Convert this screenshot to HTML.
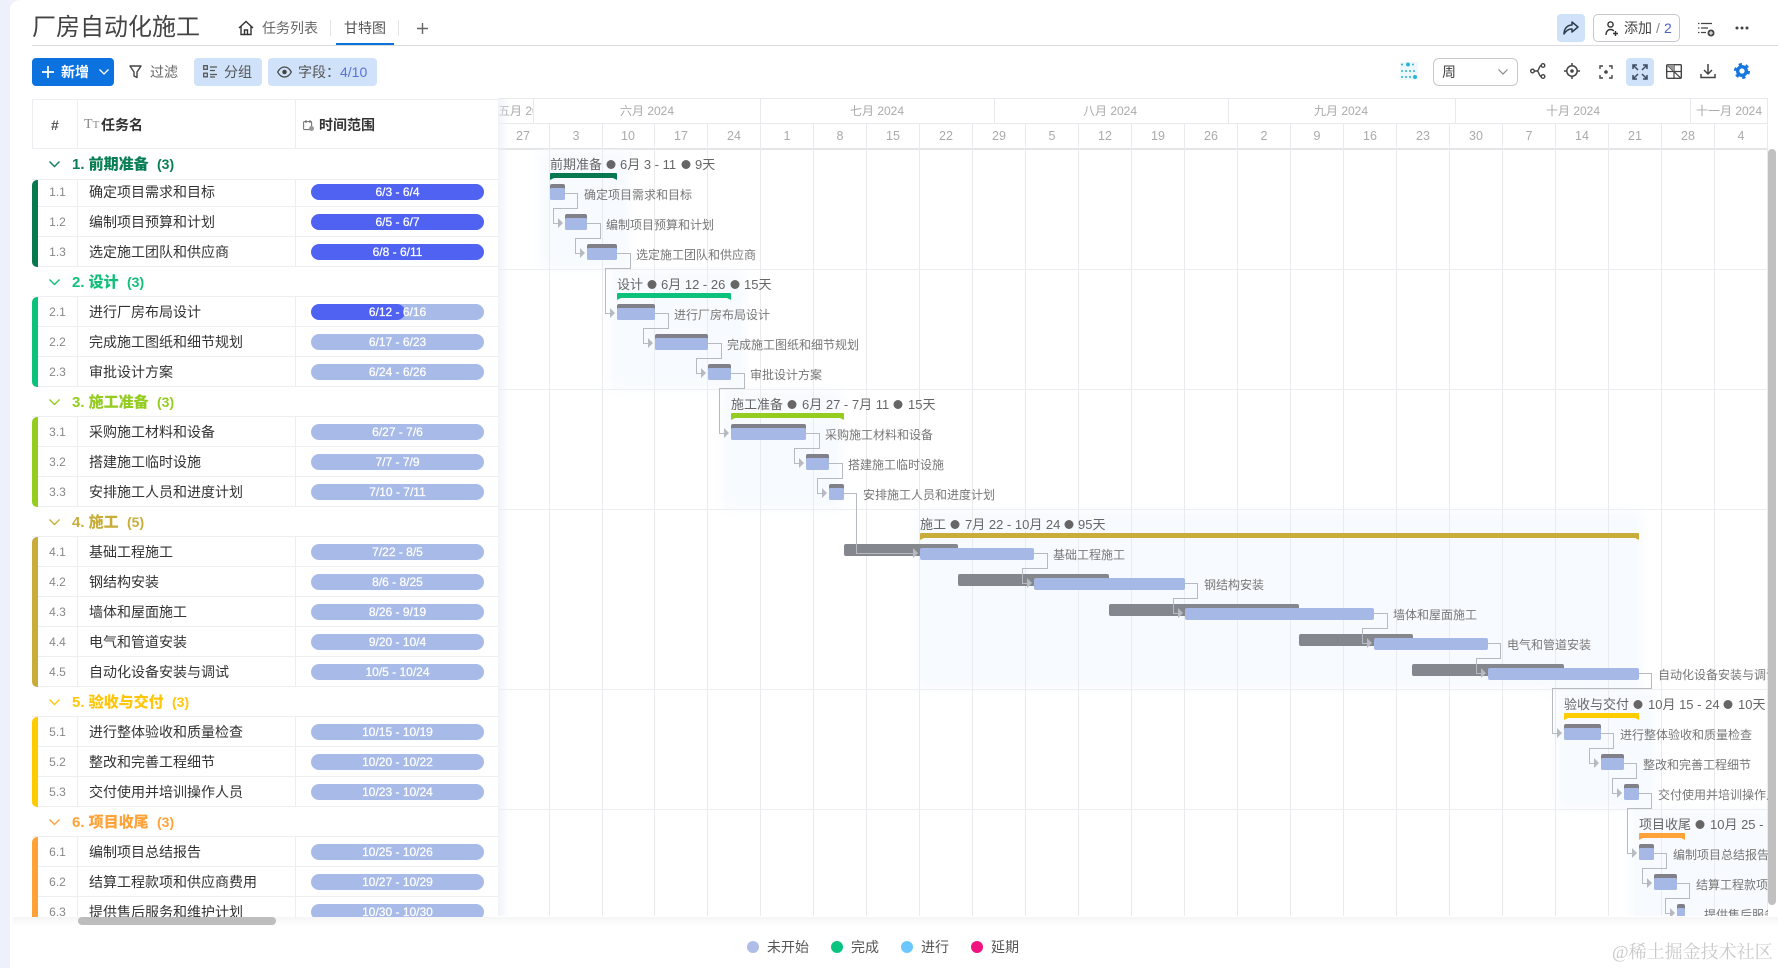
<!DOCTYPE html>
<html lang="zh"><head><meta charset="utf-8"><title>厂房自动化施工</title>
<style>
*{box-sizing:border-box}
html,body{margin:0;padding:0;width:1778px;height:968px;overflow:hidden;background:#fff;font-family:"Liberation Sans","Noto Sans CJK SC",sans-serif;color:#333}
.a{position:absolute;white-space:nowrap;line-height:20px;font-size:14px}
.side{position:absolute;left:0;top:0;width:20px;height:968px;background:#eef1fb}
.main{position:absolute;left:10px;top:0;width:1768px;height:968px;background:#fff;border-top-left-radius:10px}
.btn{position:absolute;background:#cfe2f9;border-radius:4px}
#tbl{position:absolute;left:32px;top:99px;width:466px;height:818px;overflow:hidden;background:#fff}
.r{position:absolute;left:6px;width:460px;height:30px;border-bottom:1px solid #eceef1;background:#fff}
.r::before{content:"";position:absolute;left:39px;top:0;bottom:0;width:1px;background:#eceef1}
.r::after{content:"";position:absolute;left:257px;top:0;bottom:0;width:1px;background:#eceef1}
.n{position:absolute;left:0;width:39px;top:5px;text-align:center;font-size:12px;line-height:20px;color:#888}
.t{position:absolute;left:51px;top:5px;font-size:14px;line-height:20px;color:#333;white-space:nowrap}
.p{position:absolute;left:273px;top:7px;width:173px;height:16px;border-radius:8px;background:#a8bbe8;color:#fff;font-size:12px;line-height:16px;text-align:center;overflow:hidden;-webkit-text-stroke:.25px #fff}
.p.d{background:#4f62f2}
.p i{position:absolute;left:0;top:0;height:16px;width:94px;background:#4f62f2;border-radius:8px}
.p span{position:relative}
.g{position:absolute;left:0;width:466px;height:30px;background:#fff;border-bottom:1px solid #eceef1;font-weight:bold;font-size:15px;line-height:30px}
.g b{position:absolute;left:40px;top:0;white-space:pre}
.g svg{position:absolute;left:17px;top:12px}
.bar{position:absolute;left:0;width:6px;border-radius:5px 0 0 5px}
.lg{position:absolute;top:941px;width:12px;height:12px;border-radius:6px}
.lt{position:absolute;top:937px;font-size:14px;line-height:20px;color:#555;white-space:nowrap}
svg text{font-family:"Liberation Sans","Noto Sans CJK SC",sans-serif}
</style></head><body>
<div class="side"></div><div class="main"></div>

<!-- header -->
<div class="a" style="left:32px;top:12px;font-size:24px;line-height:32px;color:#444">厂房自动化施工</div>
<svg style="position:absolute;left:238px;top:20px" width="16" height="16" viewBox="0 0 16 16" fill="none" stroke="#333" stroke-width="1.4"><path d="M1 8 8 1.5 15 8M3 6.5V14.5H13V6.5M6.5 14.5V10H9.5V14.5"/></svg>
<div class="a" style="left:262px;top:18px;color:#666">任务列表</div>
<div style="position:absolute;left:330px;top:20px;width:1px;height:16px;background:#e4e4e4"></div>
<div class="a" style="left:344px;top:18px;color:#555">甘特图</div>
<div style="position:absolute;left:398px;top:20px;width:1px;height:16px;background:#e4e4e4"></div>
<svg style="position:absolute;left:417px;top:23px" width="11" height="11" fill="none" stroke="#666" stroke-width="1.4"><path d="M5.5 0V11M0 5.5H11"/></svg>
<div style="position:absolute;left:32px;top:45px;width:1746px;height:1px;background:#dcdcdc"></div>
<div style="position:absolute;left:336px;top:43px;width:58px;height:2px;background:#0b72d9"></div>

<div class="btn" style="left:1557px;top:14px;width:28px;height:28px"></div>
<svg style="position:absolute;left:1563px;top:21px" width="16" height="14" viewBox="0 0 16 14" fill="none" stroke="#2d3a4f" stroke-width="1.5" stroke-linejoin="round"><path d="M9 1 15 6 9 11V8C5 8 3 10 1 13 1 8 4 4 9 4Z"/></svg>
<div style="position:absolute;left:1593px;top:14px;width:87px;height:28px;border:1px solid #c5c8cc;border-radius:5px"></div>
<svg style="position:absolute;left:1605px;top:21px" width="13" height="15" viewBox="0 0 13 15" fill="none" stroke="#333" stroke-width="1.4"><circle cx="5.5" cy="3.5" r="2.6"/><path d="M1 14C1 10.500 3 8.500 5.500 8.500C7 8.500 8 9 8.800 10M8 12.500H13M10.500 10V15"/></svg>
<div class="a" style="left:1624px;top:18px;color:#444">添加</div>
<div class="a" style="left:1656px;top:18px;color:#888">/</div>
<div class="a" style="left:1664px;top:18px;color:#4a63c0">2</div>
<svg style="position:absolute;left:1698px;top:21px" width="17" height="16" viewBox="0 0 17 16" fill="none" stroke="#444" stroke-width="1.3"><path d="M3 2.5H14M3 7H10M3 11.5H8M0 2.5H1.5M0 7H1.5M0 11.5H1.5"/><circle cx="13" cy="12" r="3.5" fill="#444" stroke="none"/><path d="M11 12H15M13 10V14" stroke="#fff" stroke-width="1"/></svg>
<svg style="position:absolute;left:1735px;top:26px" width="14" height="4" fill="#444"><circle cx="2" cy="2" r="1.5"/><circle cx="7" cy="2" r="1.5"/><circle cx="12" cy="2" r="1.5"/></svg>

<!-- toolbar -->
<div style="position:absolute;left:32px;top:58px;width:82px;height:28px;background:#0b72e0;border-radius:4px"></div>
<svg style="position:absolute;left:42px;top:66px" width="12" height="12" fill="none" stroke="#fff" stroke-width="1.7"><path d="M6 0V12M0 6H12"/></svg>
<div class="a" style="left:61px;top:62px;color:#fff;font-weight:bold">新增</div>
<svg style="position:absolute;left:99px;top:69px" width="10" height="6" fill="none" stroke="#fff" stroke-width="1.3"><path d="M.5 .5 5 5 9.5 .5"/></svg>
<svg style="position:absolute;left:129px;top:65px" width="13" height="14" fill="none" stroke="#444" stroke-width="1.4" stroke-linejoin="round"><path d="M1 1H12L8 7V12.500L5 11V7Z"/></svg>
<div class="a" style="left:150px;top:62px;color:#666">过滤</div>
<div class="btn" style="left:194px;top:58px;width:68px;height:28px"></div>
<svg style="position:absolute;left:203px;top:65px" width="14" height="13" fill="none" stroke="#555" stroke-width="1.3"><rect x=".7" y=".7" width="3.6" height="3.6"/><rect x=".7" y="8.2" width="3.6" height="3.6"/><path d="M7 2H14M7 5.5H12M7 9.5H14M7 12H12"/></svg>
<div class="a" style="left:224px;top:62px;color:#555">分组</div>
<div class="btn" style="left:268px;top:58px;width:109px;height:28px"></div>
<svg style="position:absolute;left:277px;top:66px" width="15" height="12" fill="none" stroke="#444" stroke-width="1.3"><path d="M.7 6C2.500 2.500 5 1 7.500 1S12.500 2.500 14.300 6C12.500 9.500 10 11 7.500 11S2.500 9.500 .7 6Z"/><circle cx="7.5" cy="6" r="1.6" fill="#444"/></svg>
<div class="a" style="left:298px;top:62px;color:#555">字段：</div>
<div class="a" style="left:340px;top:62px;color:#5a74d0">4/10</div>

<svg style="position:absolute;left:1400px;top:62px" width="18" height="18" fill="#29b6d8"><rect x="0" y="0" width="18" height="18" fill="#eef8fb"/><circle cx="8" cy="2.5" r="2"/><circle cx="2" cy="2.5" r="1"/><circle cx="13" cy="2.5" r="1"/><circle cx="2" cy="9" r="1"/><circle cx="6" cy="9" r="1"/><circle cx="10" cy="9" r="1"/><circle cx="14" cy="9" r="1"/><circle cx="2" cy="15" r="1"/><circle cx="6" cy="15" r="1"/><circle cx="10" cy="15" r="1"/><circle cx="15" cy="15" r="2"/></svg>
<div style="position:absolute;left:1433px;top:58px;width:85px;height:28px;border:1px solid #c9c9c9;border-radius:6px"></div>
<div class="a" style="left:1442px;top:62px;color:#444">周</div>
<svg style="position:absolute;left:1498px;top:69px" width="10" height="6" fill="none" stroke="#888" stroke-width="1.2"><path d="M.5 .5 5 5 9.5 .5"/></svg>

<svg style="position:absolute;left:1530px;top:63px" width="16" height="16" fill="none" stroke="#444" stroke-width="1.4"><circle cx="2.5" cy="8" r="1.8"/><circle cx="13" cy="2.5" r="1.8"/><circle cx="13" cy="13.5" r="1.8"/><path d="M4.3 8H7C9 8 9 2.5 11.2 2.5M7 8C9 8 9 13.5 11.2 13.5"/></svg>
<svg style="position:absolute;left:1564px;top:63px" width="16" height="16" fill="none" stroke="#444" stroke-width="1.5"><circle cx="8" cy="8" r="5.2"/><circle cx="8" cy="8" r="1" fill="#444"/><path d="M8 0V3M8 13V16M0 8H3M13 8H16"/></svg>
<svg style="position:absolute;left:1599px;top:65px" width="14" height="14" fill="none" stroke="#444" stroke-width="1.4"><path d="M1 4V1H4M10 1H13V4M13 10V13H10M4 13H1V10"/><circle cx="7" cy="7" r="1.1" fill="#444"/></svg>
<div class="btn" style="left:1626px;top:58px;width:28px;height:28px"></div>
<svg style="position:absolute;left:1632px;top:64px" width="16" height="16" fill="none" stroke="#3a4a60" stroke-width="1.5"><path d="M1 5V1H5M1 1 6 6M15 5V1H11M15 1 10 6M1 11V15H5M1 15 6 10M15 11V15H11M15 15 10 10"/></svg>
<svg style="position:absolute;left:1666px;top:64px" width="16" height="15" fill="none" stroke="#444" stroke-width="1.4"><rect x=".7" y=".7" width="14.6" height="13.6" rx="1"/><path d="M.7 .7 15 14.3M8 .7V14M.7 7.5H15" stroke-width="1.2"/><path d="M.7 .7H8V7.5Z" fill="#999" stroke="none"/></svg>
<svg style="position:absolute;left:1700px;top:63px" width="16" height="16" fill="none" stroke="#444" stroke-width="1.5"><path d="M8 1V10.500M4 7 8 11 12 7M1 11V14.500H15V11"/></svg>
<svg style="position:absolute;left:1734px;top:63px" width="16" height="16" fill="none" stroke="#1677e0"><circle cx="8" cy="8" r="4.3" stroke-width="3.4"/><circle cx="8" cy="8" r="6.8" stroke-width="2.4" stroke-dasharray="3.3 3.82"/></svg>

<!-- gantt -->
<svg style="position:absolute;left:0;top:0" width="1778" height="968" viewBox="0 0 1778 968">
<defs>
<clipPath id="c"><rect x="498" y="149" width="1270" height="767"/></clipPath>
<clipPath id="m"><rect x="498" y="99" width="35" height="24"/></clipPath>
<filter id="bl" x="-20%" y="-20%" width="140%" height="140%"><feGaussianBlur stdDeviation="6"/></filter>
</defs>
<!-- header grid -->
<g stroke="#e7e9ec" stroke-width="1">
<path d="M498 98.5H1768M498 123.5H1768"/>
<path d="M533.5 99V123M760.5 99V123M994.5 99V123M1228.5 99V123M1455.5 99V123M1690.5 99V123M1767.5 99V149"/>
</g>
<path d="M498 149H1768" stroke="#e3e5e8" stroke-width="2"/>
<g clip-path="url(#c)">
<g fill="#f7fafe" filter="url(#bl)">
<rect x="540" y="150" width="90" height="119"/>
<rect x="610" y="270" width="135" height="119"/>
<rect x="722" y="390" width="120" height="119"/>
<rect x="916" y="510" width="726" height="179"/>
<rect x="1556" y="690" width="100" height="119"/>
<rect x="1630" y="810" width="140" height="116"/>
</g>
</g>
<g fill="none" stroke="#e9ebef" stroke-width="1">
<path d="M549.5 124V916M602.5 124V916M654.5 124V916M707.5 124V916M760.5 124V916M813.5 124V916M866.5 124V916M919.5 124V916M972.5 124V916M1025.5 124V916M1078.5 124V916M1131.5 124V916M1184.5 124V916M1237.5 124V916M1290.5 124V916M1343.5 124V916M1396.5 124V916M1449.5 124V916M1502.5 124V916M1555.5 124V916M1608.5 124V916M1661.5 124V916M1714.5 124V916M1767.5 124V916"/>
<path d="M498 269.5H1768M498 389.5H1768M498 509.5H1768M498 689.5H1768M498 809.5H1768" stroke="#eceef1"/>
</g>
<!-- header text -->
<g font-size="12" fill="#aaa" text-anchor="middle">
<text x="498" y="115" text-anchor="start" clip-path="url(#m)">五月 2024</text>
<text x="647" y="115">六月 2024</text><text x="877" y="115">七月 2024</text><text x="1110" y="115">八月 2024</text><text x="1341" y="115">九月 2024</text><text x="1573" y="115">十月 2024</text><text x="1729" y="115">十一月 2024</text>
<g font-size="12.5">
<text x="523" y="140">27</text><text x="576" y="140">3</text><text x="628" y="140">10</text><text x="681" y="140">17</text><text x="734" y="140">24</text><text x="787" y="140">1</text><text x="840" y="140">8</text><text x="893" y="140">15</text><text x="946" y="140">22</text><text x="999" y="140">29</text><text x="1052" y="140">5</text><text x="1105" y="140">12</text><text x="1158" y="140">19</text><text x="1211" y="140">26</text><text x="1264" y="140">2</text><text x="1317" y="140">9</text><text x="1370" y="140">16</text><text x="1423" y="140">23</text><text x="1476" y="140">30</text><text x="1529" y="140">7</text><text x="1582" y="140">14</text><text x="1635" y="140">21</text><text x="1688" y="140">28</text><text x="1741" y="140">4</text>
</g></g>
<g clip-path="url(#c)">
<!-- baselines -->
<g fill="#85878f">
<rect x="844" y="544" width="114" height="12" rx="2"/><rect x="958" y="574" width="151" height="12" rx="2"/><rect x="1109" y="604" width="190" height="12" rx="2"/><rect x="1299" y="634" width="114" height="12" rx="2"/><rect x="1412" y="664" width="152" height="12" rx="2"/>
</g>
<!-- group bars -->
<path fill="#07784f" d="M550 174Q550 173 551 173H616Q617 173 617 174V180L613 178H554L550 180Z"/>
<path fill="#0cc27a" d="M617 294Q617 293 618 293H730Q731 293 731 294V300L727 298H621L617 300Z"/>
<path fill="#94cc20" d="M731 414Q731 413 732 413H843Q844 413 844 414V420L840 418H735L731 420Z"/>
<path fill="#c8ad3a" d="M920 534Q920 533 921 533H1638Q1639 533 1639 534V540L1635 538H924L920 540Z"/>
<path fill="#ffcc00" d="M1564 714Q1564 713 1565 713H1638Q1639 713 1639 714V720L1635 718H1568L1564 720Z"/>
<path fill="#ffa338" d="M1639 834Q1639 833 1640 833H1684Q1685 833 1685 834V840L1681 838H1643L1639 840Z"/>
<!-- task bars with header -->
<g fill="#7f8089">
<rect x="550" y="184" width="15" height="10" rx="2"/><rect x="565" y="214" width="22" height="10" rx="2"/><rect x="587" y="244" width="30" height="10" rx="2"/>
<rect x="617" y="304" width="38" height="10" rx="2"/><rect x="655" y="334" width="53" height="10" rx="2"/><rect x="708" y="364" width="23" height="10" rx="2"/>
<rect x="731" y="424" width="75" height="10" rx="2"/><rect x="806" y="454" width="23" height="10" rx="2"/><rect x="829" y="484" width="15" height="10" rx="2"/>
<rect x="1564" y="724" width="37" height="10" rx="2"/><rect x="1601" y="754" width="23" height="10" rx="2"/><rect x="1624" y="784" width="15" height="10" rx="2"/>
<rect x="1639" y="844" width="15" height="10" rx="2"/><rect x="1654" y="874" width="23" height="10" rx="2"/><rect x="1677" y="904" width="8" height="10" rx="2"/>
</g>
<g fill="#a6b9e6">
<rect x="550" y="188" width="15" height="12" rx="1.5"/><rect x="565" y="218" width="22" height="12" rx="1.5"/><rect x="587" y="248" width="30" height="12" rx="1.5"/>
<rect x="617" y="308" width="38" height="12" rx="1.5"/><rect x="655" y="338" width="53" height="12" rx="1.5"/><rect x="708" y="368" width="23" height="12" rx="1.5"/>
<rect x="731" y="428" width="75" height="12" rx="1.5"/><rect x="806" y="458" width="23" height="12" rx="1.5"/><rect x="829" y="488" width="15" height="12" rx="1.5"/>
<rect x="920" y="548" width="114" height="12" rx="2"/><rect x="1034" y="578" width="151" height="12" rx="2"/><rect x="1185" y="608" width="189" height="12" rx="2"/><rect x="1374" y="638" width="114" height="12" rx="2"/><rect x="1488" y="668" width="151" height="12" rx="2"/>
<rect x="1564" y="728" width="37" height="12" rx="1.5"/><rect x="1601" y="758" width="23" height="12" rx="1.5"/><rect x="1624" y="788" width="15" height="12" rx="1.5"/>
<rect x="1639" y="848" width="15" height="12" rx="1.5"/><rect x="1654" y="878" width="23" height="12" rx="1.5"/><rect x="1677" y="908" width="8" height="12" rx="1.5"/>
</g>
<!-- connectors -->
<g fill="none" stroke="#b6bac1" stroke-width="1">
<path d="M565 193.5H577.5V208.5H553.5V223.5H559"/>
<path d="M587 223.5H600.5V238.5H575.5V253.5H581"/>
<path d="M617 253.5H630.5V268.5H605.5V313.5H611"/>
<path d="M655 313.5H668.5V328.5H643.5V343.5H649"/>
<path d="M708 343.5H721.5V358.5H696.5V373.5H702"/>
<path d="M731 373.5H744.5V388.5H719.5V433.5H725"/>
<path d="M806 433.5H819.5V448.5H794.5V463.5H800"/>
<path d="M829 463.5H842.5V478.5H817.5V493.5H823"/>
<path d="M844 493.5H856.5V553.5H914"/>
<path d="M1034 553.5H1047.5V568.5H1022.5V583.5H1028"/>
<path d="M1185 583.5H1197.5V598.5H1173.5V613.5H1179"/>
<path d="M1374 613.5H1387.5V628.5H1362.5V643.5H1368"/>
<path d="M1488 643.5H1500.5V658.5H1476.5V673.5H1482"/>
<path d="M1639 673.5H1651.5V688.5H1552.5V733.5H1558"/>
<path d="M1601 733.5H1613.5V748.5H1589.5V763.5H1595"/>
<path d="M1624 763.5H1636.5V778.5H1612.5V793.5H1618"/>
<path d="M1639 793.5H1651.5V808.5H1627.5V853.5H1633"/>
<path d="M1654 853.5H1666.5V868.5H1642.5V883.5H1648"/>
<path d="M1677 883.5H1689.5V898.5H1665.5V913.5H1671"/>
</g>
<g fill="#b6bac1">
<path d="M558 218V228L563 223ZM580 248V258L585 253ZM610 308V318L615 313ZM648 338V348L653 343ZM701 368V378L706 373ZM724 428V438L729 433ZM799 458V468L804 463ZM822 488V498L827 493ZM913 548V558L918 553ZM1027 578V588L1032 583ZM1178 608V618L1183 613ZM1367 638V648L1372 643ZM1481 668V678L1486 673ZM1557 728V738L1562 733ZM1594 758V768L1599 763ZM1617 788V798L1622 793ZM1632 848V858L1637 853ZM1647 878V888L1652 883ZM1670 908V918L1675 913Z"/>
</g>
<!-- task labels -->
<g font-size="12" fill="#777">
<text x="584" y="199">确定项目需求和目标</text><text x="606" y="229">编制项目预算和计划</text><text x="636" y="259">选定施工团队和供应商</text>
<text x="674" y="319">进行厂房布局设计</text><text x="727" y="349">完成施工图纸和细节规划</text><text x="750" y="379">审批设计方案</text>
<text x="825" y="439">采购施工材料和设备</text><text x="848" y="469">搭建施工临时设施</text><text x="863" y="499">安排施工人员和进度计划</text>
<text x="1053" y="559">基础工程施工</text><text x="1204" y="589">钢结构安装</text><text x="1393" y="619">墙体和屋面施工</text><text x="1507" y="649">电气和管道安装</text><text x="1658" y="679">自动化设备安装与调试</text>
<text x="1620" y="739">进行整体验收和质量检查</text><text x="1643" y="769">整改和完善工程细节</text><text x="1658" y="799">交付使用并培训操作人员</text>
<text x="1673" y="859">编制项目总结报告</text><text x="1696" y="889">结算工程款项和供应商费用</text><text x="1704" y="919">提供售后服务和维护计划</text>
</g>
<!-- group labels -->
<g font-size="13" fill="#666">
<text x="550" y="169">前期准备</text><circle cx="611" cy="164.5" r="4.5"/><text x="620" y="169">6月 3 - 11</text><circle cx="686" cy="164.5" r="4.5"/><text x="695" y="169">9天</text>
<text x="617" y="289">设计</text><circle cx="652" cy="284.5" r="4.5"/><text x="661" y="289">6月 12 - 26</text><circle cx="735" cy="284.5" r="4.5"/><text x="744" y="289">15天</text>
<text x="731" y="409">施工准备</text><circle cx="792" cy="404.5" r="4.5"/><text x="802" y="409">6月 27 - 7月 11</text><circle cx="898" cy="404.5" r="4.5"/><text x="908" y="409">15天</text>
<text x="920" y="529">施工</text><circle cx="955" cy="524.5" r="4.5"/><text x="965" y="529">7月 22 - 10月 24</text><circle cx="1069" cy="524.5" r="4.5"/><text x="1078" y="529">95天</text>
<text x="1564" y="709">验收与交付</text><circle cx="1638" cy="704.5" r="4.5"/><text x="1648" y="709">10月 15 - 24</text><circle cx="1728" cy="704.5" r="4.5"/><text x="1738" y="709">10天</text>
<text x="1639" y="829">项目收尾</text><circle cx="1700" cy="824.5" r="4.5"/><text x="1710" y="829">10月 25 - 10月 30</text>
</g>
</g>
</svg>
<div style="position:absolute;left:498px;top:99px;width:12px;height:817px;background:linear-gradient(90deg,rgba(235,238,248,.7),rgba(255,255,255,0))"></div>
<div style="position:absolute;left:1768px;top:149px;width:8px;height:756px;background:#c0c0c0;border-radius:4px"></div>

<!-- table -->
<div id="tbl">
 <div style="position:absolute;left:0;top:0;width:466px;height:50px;background:#fff;border:1px solid #eceef1;border-right:0">
  <div style="position:absolute;left:44px;top:0;width:1px;height:50px;background:#eceef1"></div>
  <div style="position:absolute;left:262px;top:0;width:1px;height:50px;background:#eceef1"></div>
  <div class="a" style="left:18px;top:15px;color:#555;font-weight:bold">#</div>
  <div class="a" style="left:51px;top:15px;font-family:'Liberation Serif',serif;color:#888">T<span style="font-size:11px">T</span></div>
  <div class="a" style="left:68px;top:15px;font-weight:bold">任务名</div>
  <svg style="position:absolute;left:270px;top:20px" width="11" height="11" fill="none" stroke="#777" stroke-width="1.1"><rect x=".6" y="1.6" width="8" height="8" rx="1"/><path d="M3 0V3M7 0V3"/><circle cx="8.5" cy="8.5" r="2.500" fill="#999" stroke="none"/></svg>
  <div class="a" style="left:286px;top:15px;font-weight:bold">时间范围</div>
 </div>

 <div class="r" style="top:78px"><div class="n">1.1</div><div class="t">确定项目需求和目标</div><div class="p d">6/3 - 6/4</div></div>
 <div class="r" style="top:108px"><div class="n">1.2</div><div class="t">编制项目预算和计划</div><div class="p d">6/5 - 6/7</div></div>
 <div class="r" style="top:138px"><div class="n">1.3</div><div class="t">选定施工团队和供应商</div><div class="p d">6/8 - 6/11</div></div>
 <div class="bar" style="top:81px;height:87px;background:#07784f"></div>
 <div class="g" style="top:50px;height:31px;color:#0a7f55"><svg width="11" height="7" fill="none" stroke="#0a7f55" stroke-width="1.4"><path d="M.5 .5 5.5 5.5 10.5 .5"/></svg><b>1. 前期准备  <span style="font-size:14px">(3)</span></b></div>

 <div class="g" style="top:168px;color:#10c07a"><svg width="11" height="7" fill="none" stroke="#10c07a" stroke-width="1.4"><path d="M.5 .5 5.5 5.5 10.5 .5"/></svg><b>2. 设计  <span style="font-size:14px">(3)</span></b></div>
 <div class="r" style="top:198px"><div class="n">2.1</div><div class="t">进行厂房布局设计</div><div class="p"><i></i><span>6/12 - 6/16</span></div></div>
 <div class="r" style="top:228px"><div class="n">2.2</div><div class="t">完成施工图纸和细节规划</div><div class="p">6/17 - 6/23</div></div>
 <div class="r" style="top:258px"><div class="n">2.3</div><div class="t">审批设计方案</div><div class="p">6/24 - 6/26</div></div>
 <div class="bar" style="top:198px;height:90px;background:#0cc27a"></div>

 <div class="g" style="top:288px;color:#94cc20"><svg width="11" height="7" fill="none" stroke="#94cc20" stroke-width="1.4"><path d="M.5 .5 5.5 5.5 10.5 .5"/></svg><b>3. 施工准备  <span style="font-size:14px">(3)</span></b></div>
 <div class="r" style="top:318px"><div class="n">3.1</div><div class="t">采购施工材料和设备</div><div class="p">6/27 - 7/6</div></div>
 <div class="r" style="top:348px"><div class="n">3.2</div><div class="t">搭建施工临时设施</div><div class="p">7/7 - 7/9</div></div>
 <div class="r" style="top:378px"><div class="n">3.3</div><div class="t">安排施工人员和进度计划</div><div class="p">7/10 - 7/11</div></div>
 <div class="bar" style="top:318px;height:90px;background:#94cc20"></div>

 <div class="g" style="top:408px;color:#c8ad3a"><svg width="11" height="7" fill="none" stroke="#c8ad3a" stroke-width="1.4"><path d="M.5 .5 5.5 5.5 10.5 .5"/></svg><b>4. 施工  <span style="font-size:14px">(5)</span></b></div>
 <div class="r" style="top:438px"><div class="n">4.1</div><div class="t">基础工程施工</div><div class="p">7/22 - 8/5</div></div>
 <div class="r" style="top:468px"><div class="n">4.2</div><div class="t">钢结构安装</div><div class="p">8/6 - 8/25</div></div>
 <div class="r" style="top:498px"><div class="n">4.3</div><div class="t">墙体和屋面施工</div><div class="p">8/26 - 9/19</div></div>
 <div class="r" style="top:528px"><div class="n">4.4</div><div class="t">电气和管道安装</div><div class="p">9/20 - 10/4</div></div>
 <div class="r" style="top:558px"><div class="n">4.5</div><div class="t">自动化设备安装与调试</div><div class="p">10/5 - 10/24</div></div>
 <div class="bar" style="top:438px;height:150px;background:#c8ad3a"></div>

 <div class="g" style="top:588px;color:#ffc60a"><svg width="11" height="7" fill="none" stroke="#ffc60a" stroke-width="1.4"><path d="M.5 .5 5.5 5.5 10.5 .5"/></svg><b>5. 验收与交付  <span style="font-size:14px">(3)</span></b></div>
 <div class="r" style="top:618px"><div class="n">5.1</div><div class="t">进行整体验收和质量检查</div><div class="p">10/15 - 10/19</div></div>
 <div class="r" style="top:648px"><div class="n">5.2</div><div class="t">整改和完善工程细节</div><div class="p">10/20 - 10/22</div></div>
 <div class="r" style="top:678px"><div class="n">5.3</div><div class="t">交付使用并培训操作人员</div><div class="p">10/23 - 10/24</div></div>
 <div class="bar" style="top:618px;height:90px;background:#ffcc00"></div>

 <div class="g" style="top:708px;color:#ffa338"><svg width="11" height="7" fill="none" stroke="#ffa338" stroke-width="1.4"><path d="M.5 .5 5.5 5.5 10.5 .5"/></svg><b>6. 项目收尾  <span style="font-size:14px">(3)</span></b></div>
 <div class="r" style="top:738px"><div class="n">6.1</div><div class="t">编制项目总结报告</div><div class="p">10/25 - 10/26</div></div>
 <div class="r" style="top:768px"><div class="n">6.2</div><div class="t">结算工程款项和供应商费用</div><div class="p">10/27 - 10/29</div></div>
 <div class="r" style="top:798px"><div class="n">6.3</div><div class="t">提供售后服务和维护计划</div><div class="p">10/30 - 10/30</div></div>
 <div class="bar" style="top:738px;height:90px;background:#ffa338"></div>
</div>

<!-- bottom -->
<div style="position:absolute;left:13px;top:917px;width:1765px;height:10px;background:linear-gradient(#f5f5f5,#fff)"></div>
<div style="position:absolute;left:78px;top:917px;width:198px;height:8px;background:#bdbdbd;border-radius:4px"></div>
<div class="lg" style="left:747px;background:#b0bde8"></div><div class="lt" style="left:767px">未开始</div>
<div class="lg" style="left:831px;background:#07c480"></div><div class="lt" style="left:851px">完成</div>
<div class="lg" style="left:901px;background:#6bc8ff"></div><div class="lt" style="left:921px">进行</div>
<div class="lg" style="left:971px;background:#f0127e"></div><div class="lt" style="left:991px">延期</div>
<div class="a" style="left:1612px;top:940px;font-family:'Liberation Serif','Noto Serif CJK SC',serif;font-size:18px;line-height:24px;color:#c9c9c9">@稀土掘金技术社区</div>
</body></html>
